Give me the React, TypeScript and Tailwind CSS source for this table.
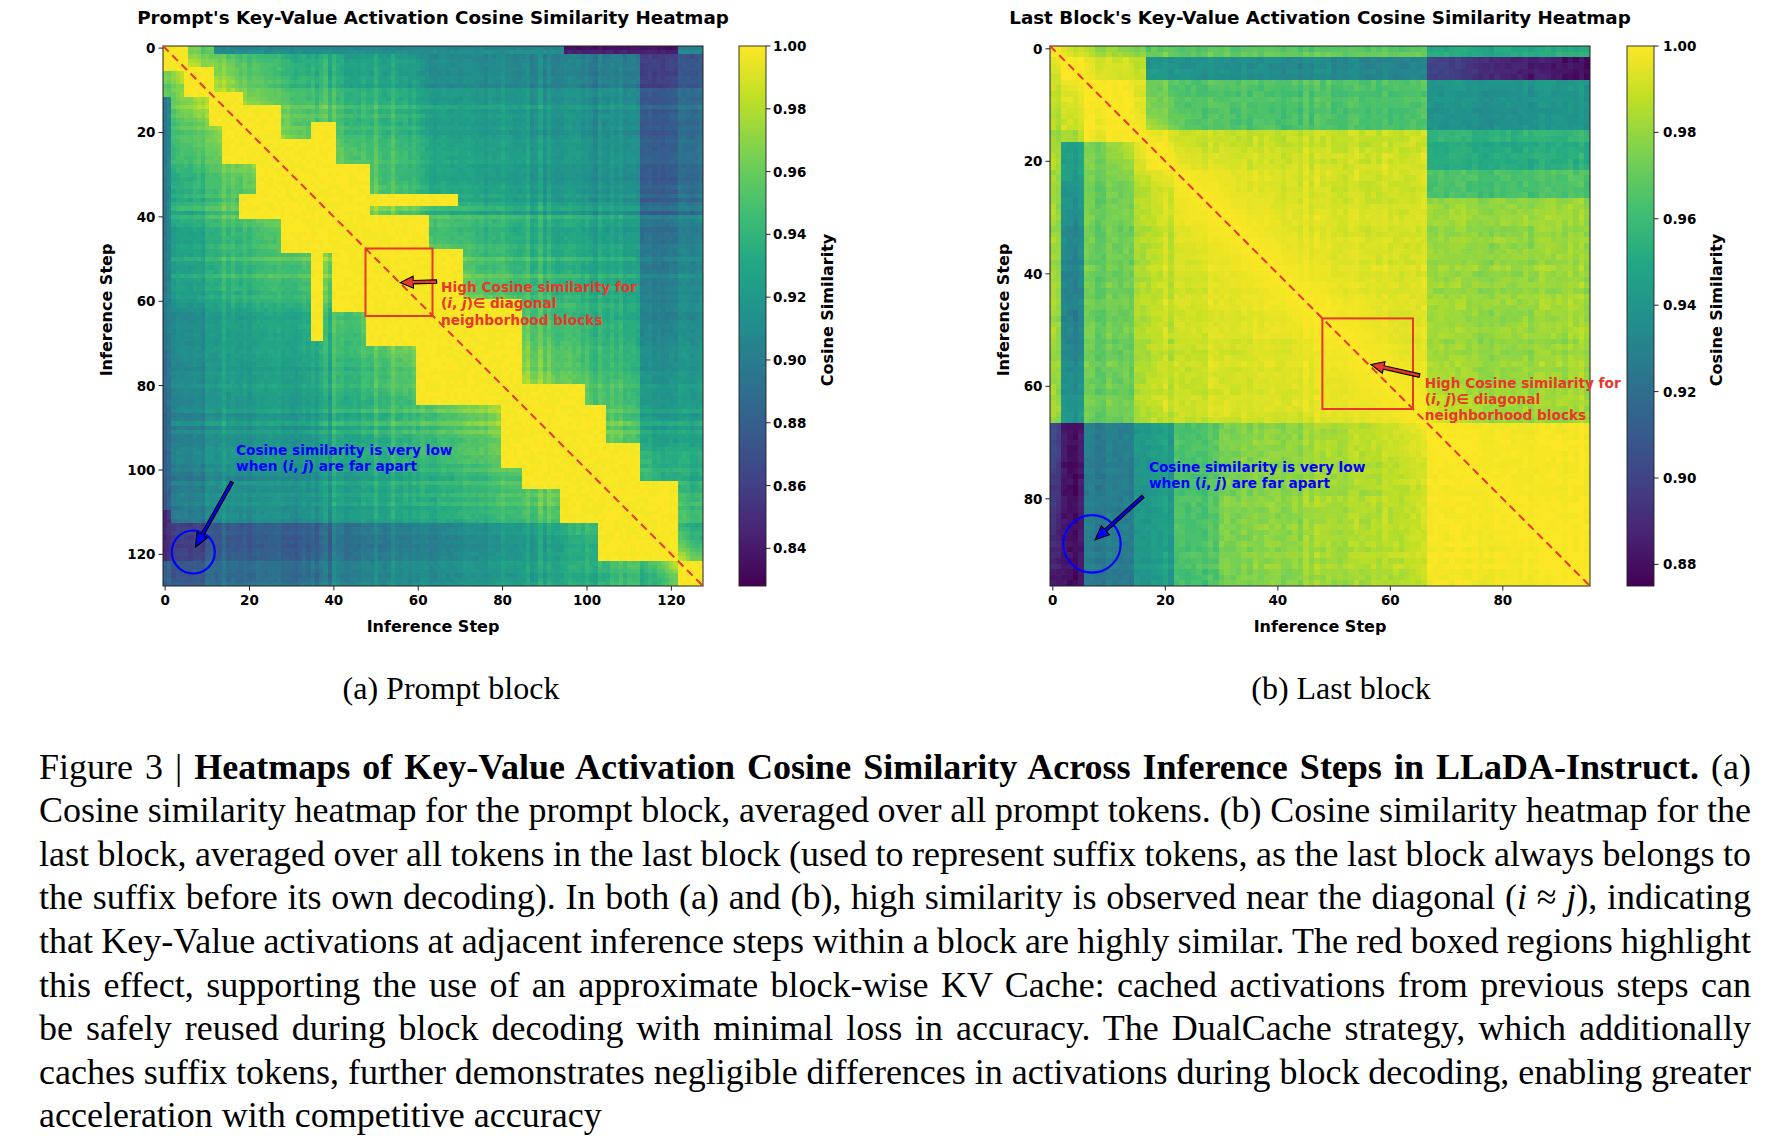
import React, { useMemo } from "react";

// viridis, 11 anchor colours (t = 0, 0.1, ... 1)
const VIRIDIS = [
  "#440154", "#482475", "#414487", "#355f8d", "#2a788e", "#21918c",
  "#22a884", "#44bf70", "#7ad151", "#bddf26", "#fde725",
];
const RGB = VIRIDIS.map((h) => [
  parseInt(h.slice(1, 3), 16),
  parseInt(h.slice(3, 5), 16),
  parseInt(h.slice(5, 7), 16),
]);
const LUT: string[] = Array.from({ length: 256 }, (_, k) => {
  const t = (k / 255) * 10;
  const i = Math.min(9, Math.floor(t));
  const f = t - i;
  const a = RGB[i];
  const b = RGB[i + 1];
  const c = [0, 1, 2].map((n) => Math.round(a[n] + (b[n] - a[n]) * f));
  return `rgb(${c[0]},${c[1]},${c[2]})`;
});

function mulberry32(seed: number) {
  let a = seed;
  return () => {
    a |= 0;
    a = (a + 0x6d2b79f5) | 0;
    let t = Math.imul(a ^ (a >>> 15), 1 | a);
    t = (t + Math.imul(t ^ (t >>> 7), 61 | t)) ^ t;
    return ((t ^ (t >>> 14)) >>> 0) / 4294967296;
  };
}

// (a) prompt block, 128 x 128, roughly symmetric
function promptData(): number[][] {
  const N = 128;
  const r = mulberry32(20240611);
  // per-step streaks, a few steps stand out more
  const line = Array.from({ length: N }, () => (r() - 0.5) * 0.007 + (r() < 0.1 ? r() * 0.01 : 0));
  const m = Array.from({ length: N }, (_, s) =>
    s < 2 ? 1.2 : s < 10 ? 1.12 : s >= 113 && s < 122 ? 1.38 : s >= 122 ? 1.22 : 1 + (r() - 0.5) * 0.08
  );
  const yellow: [number, number][] = [
    [0, 5], [5, 11], [11, 18], [14, 27], [22, 40], [28, 48], [40, 62], [48, 70],
    [60, 84], [80, 99], [85, 104], [94, 112], [103, 121], [122, 127],
  ];
  const strips = [
    [35, 37, 18, 69],
    [37, 40, 18, 40],
  ];
  const v: number[][] = Array.from({ length: N }, () => new Array(N).fill(0));
  for (let i = 0; i < N; i++) {
    for (let j = i; j < N; j++) {
      const d = j - i;
      let base = 0.912 + 0.058 * Math.exp(-d / 45) + 0.022 * Math.exp(-d / 8);
      if (i < 40 && j > 60) base -= 0.008;
      let x = 1 - (1 - base) * m[i] * m[j] + line[i] + line[j] + (r() - 0.5) * 0.006;
      if (yellow.some(([a, b]) => i >= a && j <= b)) x = 0.997 + r() * 0.004;
      if (
        strips.some(
          ([r0, r1, c0, c1]) =>
            (i >= r0 && i <= r1 && j >= c0 && j <= c1) || (j >= r0 && j <= r1 && i >= c0 && i <= c1)
        )
      )
        x = 0.997 + r() * 0.004;
      v[i][j] = x;
      v[j][i] = x;
    }
  }
  for (let s = 12; s < N; s++) {
    for (const e of [0, 1]) {
      const col = s < 60 ? 0.897 : s < 110 ? 0.897 - ((s - 60) / 50) * 0.025 : s < 122 ? 0.845 : 0.877;
      v[s][e] = col + (r() - 0.5) * 0.008 + e * 0.008;
      const row = s < 95 ? 0.905 : s < 122 ? 0.836 : 0.9;
      v[e][s] = row + (r() - 0.5) * 0.008 + e * 0.008;
    }
  }
  return v;
}

// (b) last block, 96 x 96, built from phase segments
function lastData(): number[][] {
  const N = 96;
  const r = mulberry32(77);
  const B = [0, 2, 6, 15, 17, 22, 67, 96];
  const seg = (s: number) => {
    for (let k = 0; k < 7; k++) if (s < B[k + 1]) return k;
    return 6;
  };
  const T = [
    [0.998, 0.98, 0.977, 0.977, 0.97, 0.969, 0.952],
    [0.986, 0.998, 0.99, 0.99, 0.938, 0.937, 0.9],
    [0.986, 0.99, 0.998, 0.995, 0.967, 0.965, 0.94],
    [0.98, 0.98, 0.995, 0.998, 0.99, 0.988, 0.955],
    [0.985, 0.94, 0.97, 0.99, 0.998, 0.99, 0.952],
    [0.983, 0.94, 0.971, 0.987, 0.988, 0.99, 0.981],
    [0.9, 0.881, 0.927, 0.944, 0.944, 0.975, 0.997],
  ];
  const colN = Array.from({ length: N }, () => (r() - 0.5) * 0.007);
  const rowN = Array.from({ length: N }, () => (r() - 0.5) * 0.004);
  const v: number[][] = Array.from({ length: N }, () => new Array(N).fill(0));
  for (let i = 0; i < N; i++) {
    for (let j = 0; j < N; j++) {
      const a = seg(i);
      const b = seg(j);
      let x = T[a][b];
      if (a === 1 && b === 5) x = 0.94 - ((j - 22) / 45) * 0.008;
      if (a === 1 && b === 6) x = 0.902 - ((j - 67) / 29) * 0.024;
      if (a === 5 && b === 6) x = i < 27 ? 0.965 : 0.981;
      if (a === 6 && b === 5) x = j < 30 ? 0.966 : 0.975 + ((j - 30) / 37) * 0.014;
      if (a === 6 && b === 0) x = 0.905 - ((i - 67) / 29) * 0.02;
      if (a === 5 && b === 1) x = 0.942 - 0.012 * Math.sin((Math.PI * (i - 22)) / 45);
      const d = Math.abs(i - j);
      x += colN[j] + rowN[i] + (r() - 0.5) * 0.006;
      x += (1 - x) * Math.exp(-d / 6);
      if (a === 5 && b === 5) x += (1 - x) * 0.7 * Math.exp(-d / 22);
      if (a === 6 && b === 6) x += (1 - x) * 0.5;
      v[i][j] = x;
    }
  }
  return v;
}

type Pt = [number, number];

function arrowPoints(tail: Pt, tip: Pt, w = 3.4, hw = 12, hl = 13) {
  const dx = tip[0] - tail[0];
  const dy = tip[1] - tail[1];
  const len = Math.hypot(dx, dy);
  const ux = dx / len;
  const uy = dy / len;
  const nx = -uy;
  const ny = ux;
  const bx = tip[0] - ux * hl;
  const by = tip[1] - uy * hl;
  const p = [
    [tail[0] + (nx * w) / 2, tail[1] + (ny * w) / 2],
    [bx + (nx * w) / 2, by + (ny * w) / 2],
    [bx + (nx * hw) / 2, by + (ny * hw) / 2],
    [tip[0], tip[1]],
    [bx - (nx * hw) / 2, by - (ny * hw) / 2],
    [bx - (nx * w) / 2, by - (ny * w) / 2],
    [tail[0] - (nx * w) / 2, tail[1] - (ny * w) / 2],
  ];
  return p.map((q) => `${q[0].toFixed(1)},${q[1].toFixed(1)}`).join(" ");
}

function Heatmap({ data, vmin, vmax, x, y, size }: { data: number[][]; vmin: number; vmax: number; x: number; y: number; size: number }) {
  const N = data.length;
  const color = (val: number) => {
    const t = Math.min(1, Math.max(0, (val - vmin) / (vmax - vmin)));
    return LUT[Math.round(t * 255)];
  };
  const rects: React.ReactElement[] = [];
  for (let i = 0; i < N; i++) {
    let start = 0;
    let cur = color(data[i][0]);
    for (let j = 1; j <= N; j++) {
      const c = j < N ? color(data[i][j]) : "";
      if (c !== cur) {
        rects.push(<rect key={`${i}-${start}`} x={start} y={i} width={j - start} height={1} fill={cur} />);
        start = j;
        cur = c;
      }
    }
  }
  return (
    <svg x={x} y={y} width={size} height={size} viewBox={`0 0 ${N} ${N}`} preserveAspectRatio="none" shapeRendering="crispEdges">
      {rects}
    </svg>
  );
}

const RED = "#e8372c";
const BLUE = "#0000ff";

type Cfg = {
  id: string;
  title: string;
  data: number[][];
  vmin: number;
  ticks: number[];
  cbTicks: number[];
  hx: number;
  cbx: number;
  ylabX: number;
  cbTickX: number;
  cbLabX: number;
  titleX: number;
  box: [number, number, number, number];
  redArrow: [Pt, Pt];
  redText: [number, number];
  blueText: [number, number];
  circle: [number, number, number];
  blueArrow: [Pt, Pt];
};

function FigurePanel({ cfg }: { cfg: Cfg }) {
  const HY = 46;
  const HS = 540;
  const N = cfg.data.length;
  const pos = (k: number) => (k + 0.5) * (HS / N);
  const cbY = (v: number) => HY + ((1 - v) / (1 - cfg.vmin)) * HS;
  const gid = `cb-${cfg.id}`;
  return (
    <svg width={896} height={650} className="block shrink-0 font-['DejaVu_Sans',sans-serif] font-bold">
      <defs>
        <linearGradient id={gid} x1="0" y1="1" x2="0" y2="0">
          {VIRIDIS.map((c, k) => (
            <stop key={c} offset={`${k * 10}%`} stopColor={c} />
          ))}
        </linearGradient>
      </defs>

      <text x={cfg.titleX} y={17} textAnchor="middle" dominantBaseline="central" className="text-[18.3px]" fill="#000">
        {cfg.title}
      </text>

      <Heatmap data={cfg.data} vmin={cfg.vmin} vmax={1} x={cfg.hx} y={HY} size={HS} />
      <rect x={cfg.hx} y={HY} width={HS} height={HS} fill="none" stroke="#222" strokeWidth={1} />

      {/* axis ticks */}
      {cfg.ticks.map((k) => (
        <g key={`t${k}`}>
          <line x1={cfg.hx - 4.5} x2={cfg.hx} y1={HY + pos(k)} y2={HY + pos(k)} stroke="#222" strokeWidth={1} />
          <text x={cfg.hx - 7.5} y={HY + pos(k)} textAnchor="end" dominantBaseline="central" className="text-[13.5px]" fill="#000">
            {k}
          </text>
          <line x1={cfg.hx + pos(k)} x2={cfg.hx + pos(k)} y1={HY + HS} y2={HY + HS + 4.5} stroke="#222" strokeWidth={1} />
          <text x={cfg.hx + pos(k)} y={600} textAnchor="middle" dominantBaseline="central" className="text-[13.5px]" fill="#000">
            {k}
          </text>
        </g>
      ))}
      <text x={cfg.hx + HS / 2} y={626} textAnchor="middle" dominantBaseline="central" className="text-[16px]" fill="#000">
        Inference Step
      </text>
      <text
        x={0}
        y={0}
        transform={`translate(${cfg.ylabX} ${HY + HS / 2 - 6}) rotate(-90)`}
        textAnchor="middle"
        dominantBaseline="central"
        className="text-[16px]"
        fill="#000"
      >
        Inference Step
      </text>

      {/* colorbar */}
      <rect x={cfg.cbx} y={HY} width={27} height={HS} fill={`url(#${gid})`} stroke="#222" strokeWidth={0.9} />
      {cfg.cbTicks.map((v) => (
        <g key={`c${v}`}>
          <line x1={cfg.cbx + 27} x2={cfg.cbx + 31.5} y1={cbY(v)} y2={cbY(v)} stroke="#222" strokeWidth={1} />
          <text x={cfg.cbTickX} y={cbY(v)} dominantBaseline="central" className="text-[13.5px]" fill="#000">
            {v.toFixed(2)}
          </text>
        </g>
      ))}
      <text
        x={0}
        y={0}
        transform={`translate(${cfg.cbLabX} ${HY + HS / 2 - 6}) rotate(-90)`}
        textAnchor="middle"
        dominantBaseline="central"
        className="text-[16px]"
        fill="#000"
      >
        Cosine Similarity
      </text>

      {/* annotations */}
      <line x1={cfg.hx} y1={HY} x2={cfg.hx + HS} y2={HY + HS} stroke={RED} strokeWidth={2} strokeDasharray="8 5" />
      <rect x={cfg.box[0]} y={cfg.box[1]} width={cfg.box[2]} height={cfg.box[3]} fill="none" stroke={RED} strokeWidth={2} />
      <polygon points={arrowPoints(cfg.redArrow[0], cfg.redArrow[1])} fill={RED} stroke="#000" strokeWidth={1.1} strokeLinejoin="miter" />
      <g className="text-[13.7px]" fill={RED}>
        <text x={cfg.redText[0]} y={cfg.redText[1]} dominantBaseline="central">
          High Cosine similarity for
        </text>
        <text x={cfg.redText[0]} y={cfg.redText[1] + 16.4} dominantBaseline="central">
          (<tspan className="italic">i</tspan>, <tspan className="italic">j</tspan>)∈ diagonal
        </text>
        <text x={cfg.redText[0]} y={cfg.redText[1] + 32.8} dominantBaseline="central">
          neighborhood blocks
        </text>
      </g>
      <g className="text-[13.7px]" fill={BLUE}>
        <text x={cfg.blueText[0]} y={cfg.blueText[1]} dominantBaseline="central">
          Cosine similarity is very low
        </text>
        <text x={cfg.blueText[0]} y={cfg.blueText[1] + 16.4} dominantBaseline="central">
          when (<tspan className="italic">i</tspan>, <tspan className="italic">j</tspan>) are far apart
        </text>
      </g>
      <circle cx={cfg.circle[0]} cy={cfg.circle[1]} r={cfg.circle[2]} fill="none" stroke={BLUE} strokeWidth={2.2} />
      <polygon points={arrowPoints(cfg.blueArrow[0], cfg.blueArrow[1], 3.2, 12, 14)} fill={BLUE} stroke="#000" strokeWidth={1.1} />
    </svg>
  );
}

const JUST = "text-justify [text-align-last:justify] [word-spacing:-3px]";

export default function App() {
  const left = useMemo(() => promptData(), []);
  const right = useMemo(() => lastData(), []);

  const leftCfg: Cfg = {
    id: "a",
    title: "Prompt's Key-Value Activation Cosine Similarity Heatmap",
    data: left,
    vmin: 0.828,
    ticks: [0, 20, 40, 60, 80, 100, 120],
    cbTicks: [1.0, 0.98, 0.96, 0.94, 0.92, 0.9, 0.88, 0.86, 0.84],
    hx: 163,
    cbx: 739,
    ylabX: 106,
    cbTickX: 773,
    cbLabX: 827,
    titleX: 433,
    box: [365.5, 248.5, 67, 67.5],
    redArrow: [[436.6, 281.5], [400.3, 282.6]],
    redText: [441, 287],
    blueText: [236, 449.5],
    circle: [193.3, 552, 21.5],
    blueArrow: [[232, 482], [195.5, 547]],
  };

  const rightCfg: Cfg = {
    id: "b",
    title: "Last Block's Key-Value Activation Cosine Similarity Heatmap",
    data: right,
    vmin: 0.875,
    ticks: [0, 20, 40, 60, 80],
    cbTicks: [1.0, 0.98, 0.96, 0.94, 0.92, 0.9, 0.88],
    hx: 154,
    cbx: 731,
    ylabX: 107,
    cbTickX: 767,
    cbLabX: 820,
    titleX: 424,
    box: [426.4, 318.4, 90.6, 90.6],
    redArrow: [[523.5, 375.6], [475, 364.5]],
    redText: [528.7, 382.6],
    blueText: [252.9, 466.5],
    circle: [196, 543.9, 28.7],
    blueArrow: [[247, 496.4], [199.1, 539.8]],
  };

  return (
    <div className="h-[1146px] w-[1792px] overflow-hidden bg-white font-['Liberation_Serif',serif] text-black">
      <div className="flex">
        <FigurePanel cfg={leftCfg} />
        <FigurePanel cfg={rightCfg} />
      </div>

      <div className="mt-[17px] grid grid-cols-2 text-[32px] leading-[43.6px]">
        <div className="pl-[6px] text-center">(a) Prompt block</div>
        <div className="pr-[6px] text-center">(b) Last block</div>
      </div>

      <div className="ml-[39px] mt-[35px] w-[1712px] text-[36px] leading-[43.6px]">
        <div className={JUST}>
          Figure 3 | <b>Heatmaps of Key-Value Activation Cosine Similarity Across Inference Steps in LLaDA-Instruct.</b> (a)
        </div>
        <div className={JUST}>
          Cosine similarity heatmap for the prompt block, averaged over all prompt tokens. (b) Cosine similarity heatmap for the
        </div>
        <div className={JUST}>
          last block, averaged over all tokens in the last block (used to represent suffix tokens, as the last block always belongs to
        </div>
        <div className={JUST}>
          the suffix before its own decoding). In both (a) and (b), high similarity is observed near the diagonal (<i>i</i> ≈ <i>j</i>), indicating
        </div>
        <div className={JUST}>
          that Key-Value activations at adjacent inference steps within a block are highly similar. The red boxed regions highlight
        </div>
        <div className={JUST}>
          this effect, supporting the use of an approximate block-wise KV Cache: cached activations from previous steps can
        </div>
        <div className={JUST}>
          be safely reused during block decoding with minimal loss in accuracy. The DualCache strategy, which additionally
        </div>
        <div className={JUST}>
          caches suffix tokens, further demonstrates negligible differences in activations during block decoding, enabling greater
        </div>
        <div>acceleration with competitive accuracy</div>
      </div>
    </div>
  );
}
